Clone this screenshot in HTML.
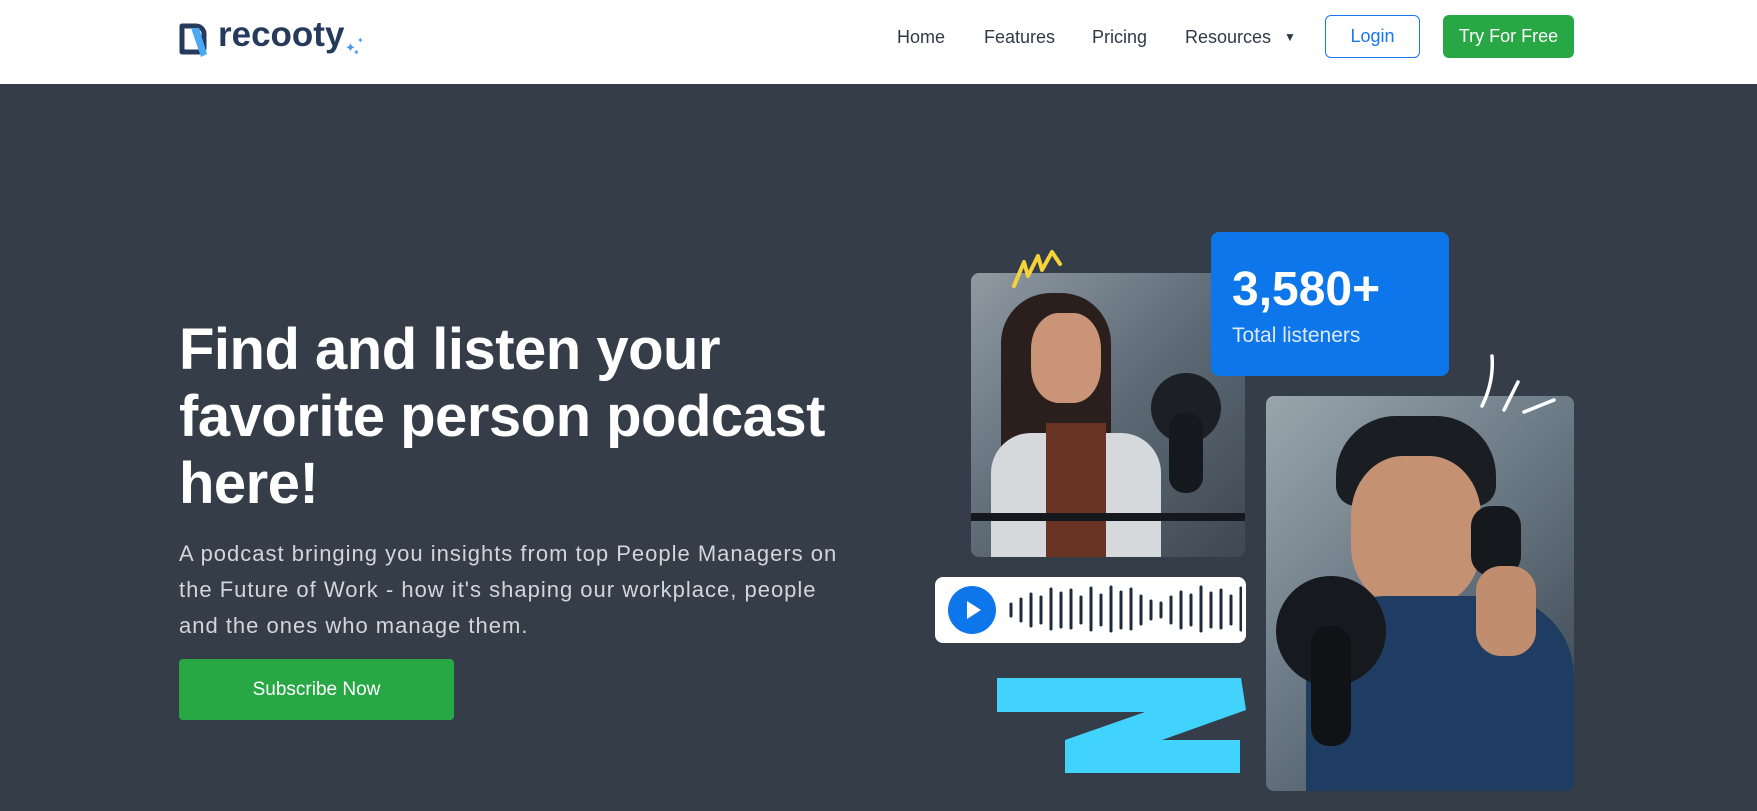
<!DOCTYPE html>
<html><head><meta charset="utf-8"><style>
*{margin:0;padding:0;box-sizing:border-box}
body{width:1757px;height:811px;overflow:hidden;background:#343d48;font-family:"Liberation Sans",sans-serif;position:relative}
.hdr{position:absolute;left:0;top:0;width:1757px;height:84px;background:#fff}
.nav{position:absolute;top:27px;font-size:18px;color:#2f3a47}
.btn{position:absolute;top:15px;height:43px;border-radius:6px;font-size:18px;display:flex;align-items:center;justify-content:center}
h1{position:absolute;left:179px;top:316px;font-size:58px;line-height:67px;color:#fff;font-weight:700;letter-spacing:-0.5px}
p.d{position:absolute;left:179px;top:536px;font-size:22px;letter-spacing:1px;line-height:36px;color:#d2d6db;width:800px}
.sub{position:absolute;left:179px;top:659px;width:275px;height:61px;background:#28a745;color:#fff;border-radius:4px;font-size:19px;display:flex;align-items:center;justify-content:center}
.img{position:absolute;border-radius:8px;overflow:hidden}
</style></head><body>
<div class="hdr">
  <svg style="position:absolute;left:178px;top:20px" width="40" height="40" viewBox="0 0 40 40">
    <path d="M4 6h14a8 8 0 0 1 8 8v14a4 4 0 0 1-4 4H4z" fill="none" stroke="#263a5c" stroke-width="5" stroke-linejoin="round"/>
    <path d="M13 8l8 0 8 26-6 3z" fill="#4aa8f5"/>
  </svg>
  <div style="position:absolute;left:218px;top:15px;font-size:35px;font-weight:700;color:#263a5c">recooty</div>
  <div style="position:absolute;left:345px;top:40px;font-size:13px;color:#4a9af0">✦</div>
  <div style="position:absolute;left:357px;top:36px;font-size:8px;color:#4a9af0">✦</div>
  <div style="position:absolute;left:353px;top:48px;font-size:8px;color:#4a9af0">✦</div>
  <div class="nav" style="left:897px">Home</div>
  <div class="nav" style="left:984px">Features</div>
  <div class="nav" style="left:1092px">Pricing</div>
  <div class="nav" style="left:1185px">Resources <span style="font-size:12px;margin-left:8px;vertical-align:2px">▼</span></div>
  <div class="btn" style="left:1325px;width:95px;border:1.5px solid #1877f2;color:#1877f2">Login</div>
  <div class="btn" style="left:1443px;width:131px;background:#28a745;color:#fff">Try For Free</div>
</div>
<h1>Find and listen your<br>favorite person podcast<br>here!</h1>
<p class="d">A podcast bringing you insights from top People Managers on<br>the Future of Work - how it's shaping our workplace, people<br>and the ones who manage them.</p>
<div class="sub">Subscribe Now</div>

<div class="img" style="left:971px;top:273px;width:274px;height:284px;background:linear-gradient(135deg,#8f9aa3,#5d6a75 50%,#3e4852)">
  <div style="position:absolute;left:30px;top:20px;width:110px;height:230px;background:#2a1f1c;border-radius:50px 50px 10px 10px"></div>
  <div style="position:absolute;left:60px;top:40px;width:70px;height:90px;background:#c99478;border-radius:40%"></div>
  <div style="position:absolute;left:20px;top:160px;width:170px;height:130px;background:#d6d9dc;border-radius:40px 40px 0 0"></div>
  <div style="position:absolute;left:75px;top:150px;width:60px;height:140px;background:#6a3424"></div>
  <div style="position:absolute;left:180px;top:100px;width:70px;height:70px;background:#1c1f24;border-radius:50%"></div>
  <div style="position:absolute;left:198px;top:140px;width:34px;height:80px;background:#15181c;border-radius:16px"></div>
  <div style="position:absolute;left:0;top:240px;width:274px;height:8px;background:#15181c"></div>
</div>
<svg style="position:absolute;left:1010px;top:246px" width="56" height="46" viewBox="0 0 56 46"><path d="M4 40 L14 16 L18 30 L28 10 L32 24 L42 6 L50 18" fill="none" stroke="#f5d33a" stroke-width="4" stroke-linecap="round" stroke-linejoin="round"/></svg>
<div style="position:absolute;left:1211px;top:232px;width:238px;height:144px;background:#0d76ea;border-radius:8px;color:#fff">
  <div style="position:absolute;left:21px;top:30px;font-size:48px;font-weight:700">3,580+</div>
  <div style="position:absolute;left:21px;top:92px;font-size:21px;color:#dde9fb">Total listeners</div>
</div>
<div class="img" style="left:1266px;top:396px;width:308px;height:395px;background:linear-gradient(135deg,#9aa6ae,#6c7a85 45%,#33404c)">
  <div style="position:absolute;left:70px;top:20px;width:160px;height:90px;background:#1a1d22;border-radius:60px 60px 20px 20px"></div>
  <div style="position:absolute;left:85px;top:60px;width:130px;height:150px;background:#c49272;border-radius:40%"></div>
  <div style="position:absolute;left:40px;top:200px;width:268px;height:200px;background:#1f3d63;border-radius:80px 80px 0 0"></div>
  <div style="position:absolute;left:205px;top:110px;width:50px;height:70px;background:#15181c;border-radius:20px"></div>
  <div style="position:absolute;left:10px;top:180px;width:110px;height:110px;background:#16191d;border-radius:50%"></div>
  <div style="position:absolute;left:45px;top:230px;width:40px;height:120px;background:#101215;border-radius:18px"></div>
  <div style="position:absolute;left:210px;top:170px;width:60px;height:90px;background:#c08e6e;border-radius:25px"></div>
</div>
<svg style="position:absolute;left:1476px;top:352px" width="84" height="66" viewBox="0 0 84 66"><g fill="none" stroke="#fff" stroke-width="3.5" stroke-linecap="round"><path d="M16 4 Q18 30 6 54"/><path d="M42 30 L28 58"/><path d="M78 48 L48 60"/></g></svg>
<div style="position:absolute;left:935px;top:577px;width:311px;height:66px;background:#fff;border-radius:8px">
  <div style="position:absolute;left:13px;top:9px;width:48px;height:48px;border-radius:50%;background:#0d76ea"></div>
  <svg style="position:absolute;left:13px;top:9px" width="48" height="48"><path d="M19 15 L33 24 L19 33z" fill="#fff"/></svg>
  <svg style="position:absolute;left:72px;top:0" width="235" height="66">
    <g stroke="#1c2a3a" stroke-width="3" stroke-linecap="round">
      <path d="M4 27v12M14 22v22M24 17v32M34 20v26M44 12v40M54 16v34M64 13v38M74 20v26M84 11v42M94 18v30M104 10v44M114 15v36M124 12v40M134 19v28M144 24v18M154 26v14M164 20v26M174 15v36M184 18v30M194 10v44M204 16v34M214 13v38M224 19v28M234 11v42"/>
    </g>
  </svg>
</div>
<svg style="position:absolute;left:0;top:0" width="1757" height="811"><polygon points="997,678 1241,678 1246,710 1162,740 1240,740 1240,773 1065,773 1065,740 1145,712 997,712" fill="#42d3fd"/></svg>
</body></html>
